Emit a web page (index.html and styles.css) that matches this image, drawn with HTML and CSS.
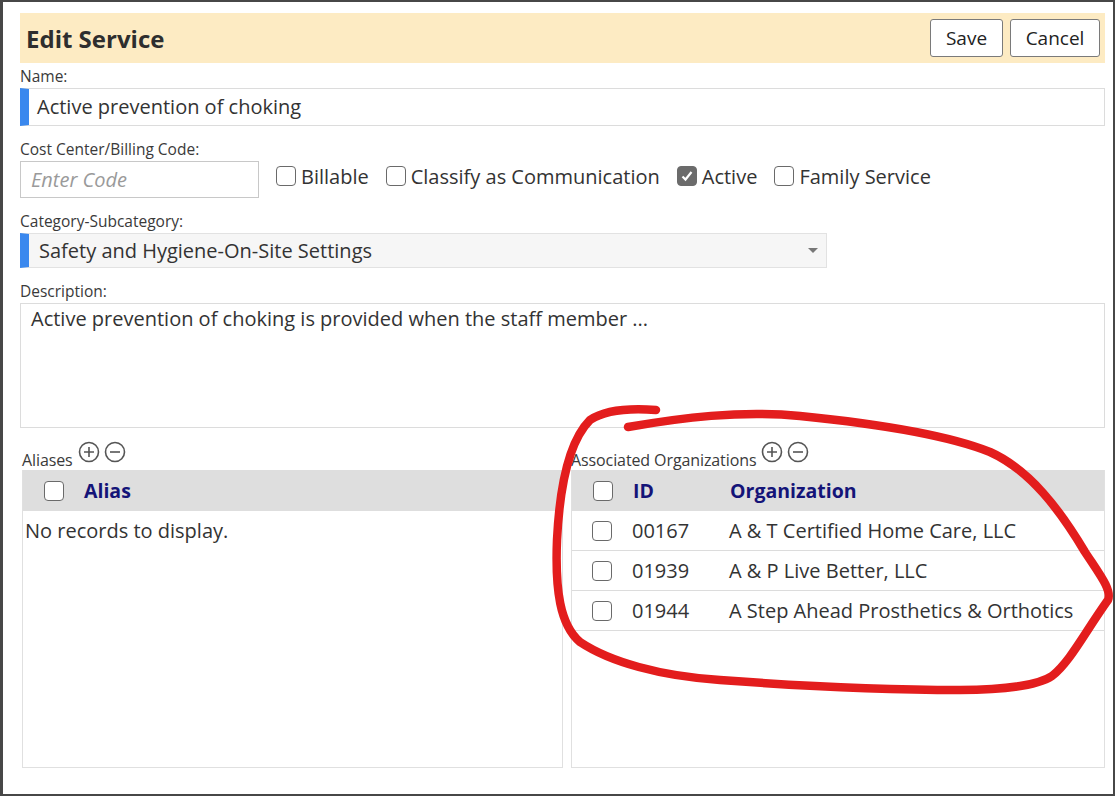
FILE: index.html
```html
<!DOCTYPE html>
<html lang="en">
<head>
    <meta charset="UTF-8">
    <title>Edit Service</title>
    <link rel="stylesheet" href="styles.css">
</head>
<body>
    <div class="frame">
        <div class="header">
            <h1>Edit Service</h1>
            <div class="buttons">
                <button class="btn btn-save">Save</button>
                <button class="btn btn-cancel">Cancel</button>
            </div>
        </div>

        <label class="field-label first">Name:</label>
        <div class="input required name-input">Active prevention of choking</div>

        <label class="field-label">Cost Center/Billing Code:</label>
        <div class="code-row">
            <div class="input code-input">Enter Code</div>
            <span class="check"><span class="box"></span>Billable</span>
            <span class="check"><span class="box"></span>Classify as Communication</span>
            <span class="check"><span class="box checked">
                <svg width="14" height="14" viewBox="0 0 14 14"><path d="M2.5 7.5 L5.5 10.5 L11.5 3" fill="none" stroke="#fff" stroke-width="2.2"/></svg>
            </span>Active</span>
            <span class="check"><span class="box"></span>Family Service</span>
        </div>

        <label class="field-label">Category-Subcategory:</label>
        <div class="input required select">
            <span>Safety and Hygiene-On-Site Settings</span>
            <span class="arrow"></span>
        </div>

        <label class="field-label">Description:</label>
        <div class="input textarea">Active prevention of choking is provided when the staff member ...</div>

        <!-- Aliases and organizations side by side -->
        <div class="lists">
            <div class="list aliases">
                <div class="list-title">Aliases
                    <svg class="icon" width="22" height="22" viewBox="0 0 22 22"><circle cx="11" cy="11" r="9.5" fill="none" stroke="#555" stroke-width="1.6"/><path d="M6 11 H16 M11 6 V16" stroke="#555" stroke-width="1.6"/></svg>
                    <svg class="icon" width="22" height="22" viewBox="0 0 22 22"><circle cx="11" cy="11" r="9.5" fill="none" stroke="#555" stroke-width="1.6"/><path d="M6 11 H16" stroke="#555" stroke-width="1.6"/></svg>
                </div>
                <div class="grid">
                    <div class="grid-head">
                        <span class="box"></span>
                        <span class="col-alias">Alias</span>
                    </div>
                    <div class="empty">No records to display.</div>
                </div>
            </div>

            <div class="list orgs">
                <div class="list-title">Associated Organizations
                    <svg class="icon" width="22" height="22" viewBox="0 0 22 22"><circle cx="11" cy="11" r="9.5" fill="none" stroke="#555" stroke-width="1.6"/><path d="M6 11 H16 M11 6 V16" stroke="#555" stroke-width="1.6"/></svg>
                    <svg class="icon" width="22" height="22" viewBox="0 0 22 22"><circle cx="11" cy="11" r="9.5" fill="none" stroke="#555" stroke-width="1.6"/><path d="M6 11 H16" stroke="#555" stroke-width="1.6"/></svg>
                </div>
                <div class="grid">
                    <div class="grid-head">
                        <span class="box"></span>
                        <span class="col-id">ID</span>
                        <span>Organization</span>
                    </div>
                    <div class="grid-row">
                        <span class="box"></span>
                        <span class="col-id">00167</span>
                        <span>A &amp; T Certified Home Care, LLC</span>
                    </div>
                    <div class="grid-row">
                        <span class="box"></span>
                        <span class="col-id">01939</span>
                        <span>A &amp; P Live Better, LLC</span>
                    </div>
                    <div class="grid-row">
                        <span class="box"></span>
                        <span class="col-id">01944</span>
                        <span>A Step Ahead Prosthetics &amp; Orthotics</span>
                    </div>
                </div>
            </div>
        </div>

        <!-- hand drawn red marker loop over the organizations grid -->
        <svg class="marker" width="1116" height="797" viewBox="0 0 1116 797">
            <path d="M656 410 C630 408 605 410 590 420 C570 440 560 480 557 540 C555 590 560 625 580 642 C610 662 660 676 720 680 C800 686 880 690 960 690 C1010 690 1040 684 1052 676 C1070 662 1085 632 1108 600 C1112 590 1100 575 1085 552 C1060 510 1030 470 990 452 C950 436 880 424 800 416 C740 410 680 418 628 427" fill="none" stroke="#e31d1d" stroke-width="8.5" stroke-linecap="round" stroke-linejoin="round"/>
        </svg>
    </div>
</body>
</html>
```

FILE: styles.css
```css
body {
    margin: 0;
    padding: 0;
    background: #fff;
    font-family: "Open Sans", "Noto Sans", sans-serif;
    color: #333;
}

.frame {
    position: relative;
    box-sizing: border-box;
    width: 1115px;
    height: 796px;
    border-style: solid;
    border-color: #474747;
    border-width: 2px 2px 2px 3px;
    padding: 11px 8px 0 17px;
    overflow: hidden;
}

.header {
    display: flex;
    justify-content: space-between;
    align-items: center;
    height: 50px;
    background-color: #fdebc3;
    padding: 0 5px 0 6px;
}

.header h1 {
    margin: 0;
    font-size: 24px;
    font-weight: 700;
    color: #2e2e2e;
}

.buttons {
    display: flex;
    gap: 7px;
}

.btn {
    height: 38px;
    font-family: "Open Sans", sans-serif;
    font-size: 19px;
    color: #222;
    background: #fff;
    border: 1px solid #7a7a7a;
    border-radius: 3px;
    padding: 0;
}

.btn-save {
    width: 73px;
}

.btn-cancel {
    width: 90px;
}

.field-label {
    display: block;
    font-size: 15.5px;
    line-height: 20px;
    color: #3a3a3a;
    margin: 13px 0 2px;
}

.field-label.first {
    margin-top: 3px;
}

.input {
    box-sizing: border-box;
    border: 1px solid #dcdcdc;
    background: #fff;
    font-size: 20px;
    color: #333;
}

.required {
    border-left: 9px solid #3a88ee;
}

.name-input {
    height: 38px;
    line-height: 36px;
    padding-left: 8px;
}

.code-row {
    display: flex;
    align-items: center;
}

.code-input {
    width: 239px;
    height: 37px;
    line-height: 35px;
    padding-left: 10px;
    font-size: 20px;
    font-style: italic;
    color: #9a9a9a;
    margin-right: 17px;
    border-color: #c8c8c8;
}

.check {
    display: flex;
    align-items: center;
    font-size: 20px;
    color: #333;
    margin-right: 17px;
    margin-top: -7px;
}

.box {
    box-sizing: border-box;
    display: inline-flex;
    align-items: center;
    justify-content: center;
    width: 20px;
    height: 20px;
    border: 1.5px solid #6a6a6a;
    border-radius: 4px;
    background: #fff;
    flex-shrink: 0;
}

.check .box {
    margin-right: 5px;
}

.box.checked {
    background: #6b6b6b;
    border-color: #6b6b6b;
}

.select {
    width: 807px;
    height: 35px;
    display: flex;
    justify-content: space-between;
    align-items: center;
    padding: 0 8px 0 10px;
    background: #f6f6f6;
    border-color: #e2e2e2;
    border-left-color: #3a88ee;
}

.arrow {
    width: 0;
    height: 0;
    border-left: 5px solid transparent;
    border-right: 5px solid transparent;
    border-top: 5px solid #777;
}

.textarea {
    height: 125px;
    padding: 1px 10px;
    line-height: 28px;
}

.lists {
    display: flex;
    gap: 8px;
    margin: 11px 0 0 2px;
}

.list {
    display: flex;
    flex-direction: column;
}

.aliases {
    width: 541px;
}

.orgs {
    width: 534px;
}

.list-title {
    display: flex;
    align-items: flex-end;
    height: 31px;
    font-size: 16px;
    color: #3a3a3a;
    line-height: 20px;
    letter-spacing: -0.1px;
}

.list-title .icon {
    margin-left: 5px;
    margin-bottom: 7px;
}

.list-title .icon + .icon {
    margin-left: 4px;
}

.grid {
    box-sizing: border-box;
    height: 298px;
    border: 1px solid #e0e0e0;
    border-top: none;
}

.grid-head {
    display: flex;
    align-items: center;
    height: 41px;
    background: #dedede;
    padding-left: 21px;
    font-size: 19.5px;
    font-weight: 700;
    color: #141478;
}

.grid-head .box,
.grid-row .box {
    margin-right: 20px;
}

.col-id {
    width: 97px;
}

.grid-row {
    display: flex;
    align-items: center;
    height: 40px;
    box-sizing: border-box;
    padding-left: 20px;
    border-bottom: 1px solid #dcdcdc;
    font-size: 20px;
    color: #333;
}

.empty {
    padding: 6px 0 0 2px;
    font-size: 20px;
    color: #333;
}

.marker {
    position: absolute;
    left: -3px;
    top: -2px;
    pointer-events: none;
}
```
